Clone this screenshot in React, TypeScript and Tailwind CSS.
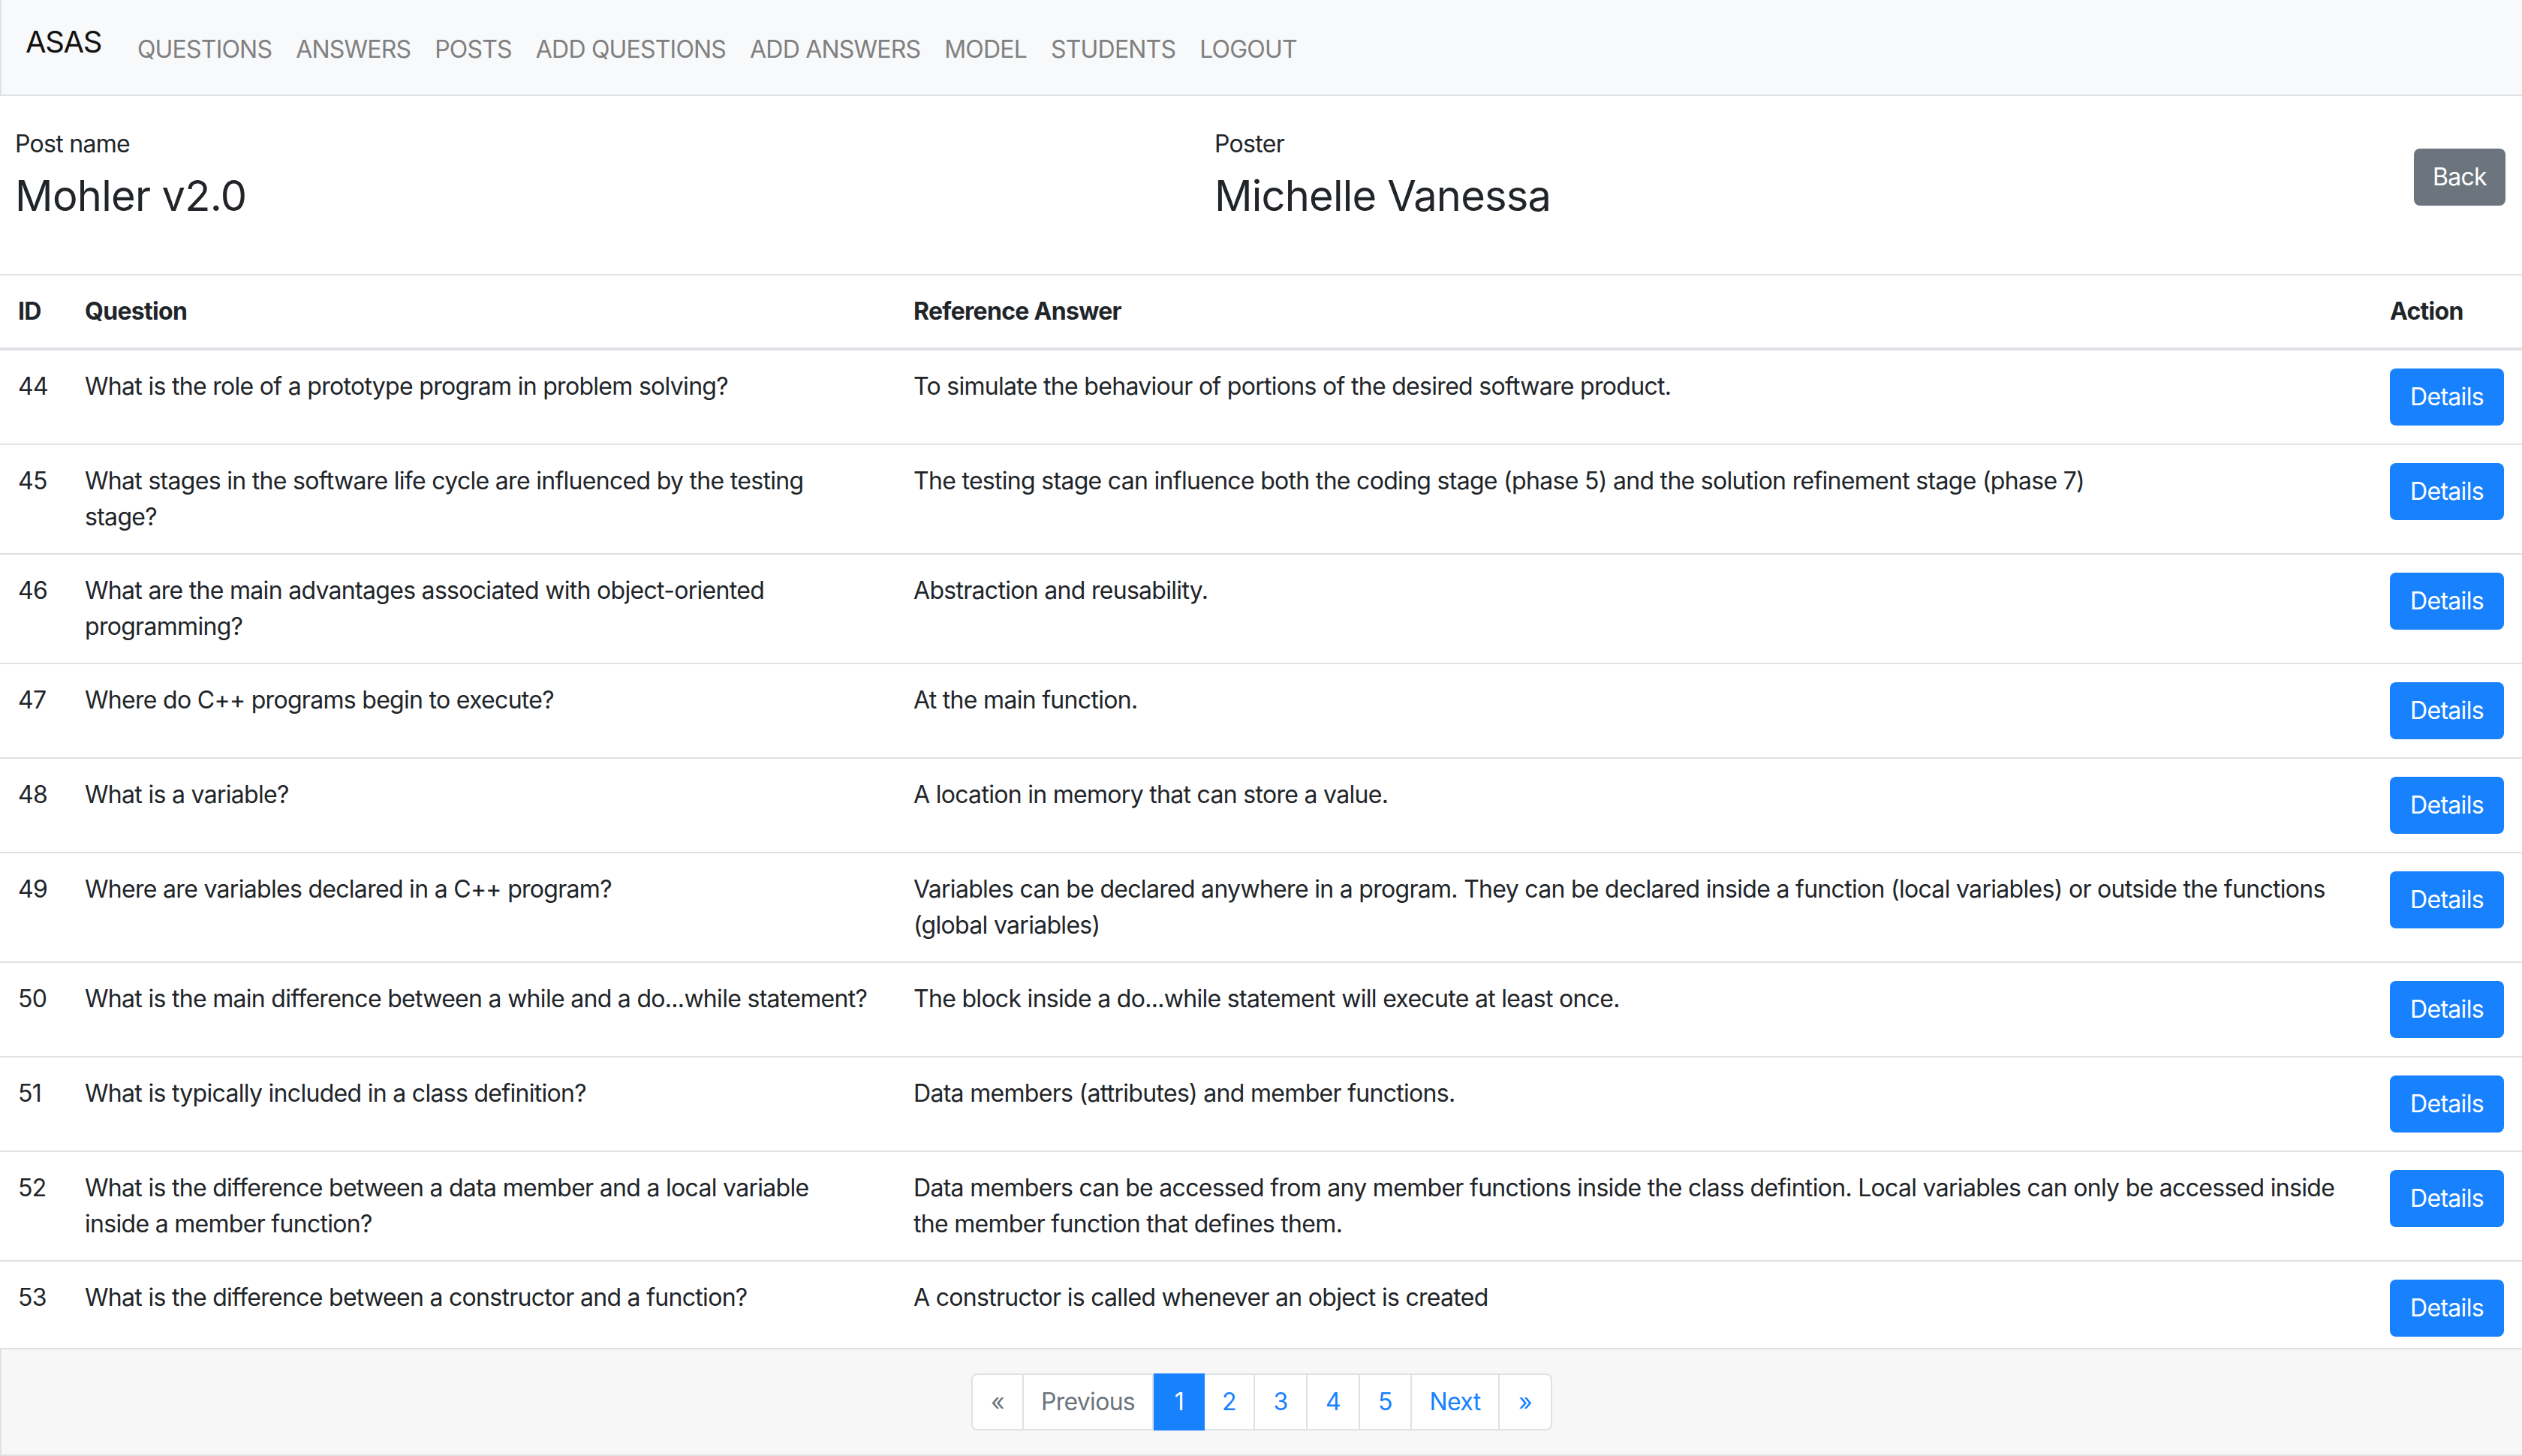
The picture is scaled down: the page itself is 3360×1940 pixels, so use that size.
// Post detail page — post header, list of questions with reference answers, pager.
const rows: { id: number; q: string[]; a: string[] }[] = [
  { id: 44, q: ['What is the role of a prototype program in problem solving?'], a: ['To simulate the behaviour of portions of the desired software product.'] },
  {
    id: 45,
    q: ['What stages in the software life cycle are influenced by the testing', 'stage?'],
    a: ['The testing stage can influence both the coding stage (phase 5) and the solution refinement stage (phase 7)'],
  },
  { id: 46, q: ['What are the main advantages associated with object-oriented', 'programming?'], a: ['Abstraction and reusability.'] },
  { id: 47, q: ['Where do C++ programs begin to execute?'], a: ['At the main function.'] },
  { id: 48, q: ['What is a variable?'], a: ['A location in memory that can store a value.'] },
  {
    id: 49,
    q: ['Where are variables declared in a C++ program?'],
    a: [
      'Variables can be declared anywhere in a program. They can be declared inside a function (local variables) or outside the functions',
      '(global variables)',
    ],
  },
  { id: 50, q: ['What is the main difference between a while and a do...while statement?'], a: ['The block inside a do...while statement will execute at least once.'] },
  { id: 51, q: ['What is typically included in a class definition?'], a: ['Data members (attributes) and member functions.'] },
  {
    id: 52,
    q: ['What is the difference between a data member and a local variable', 'inside a member function?'],
    a: [
      'Data members can be accessed from any member functions inside the class defintion. Local variables can only be accessed inside',
      'the member function that defines them.',
    ],
  },
  { id: 53, q: ['What is the difference between a constructor and a function?'], a: ['A constructor is called whenever an object is created'] },
];

const navItems = ['QUESTIONS', 'ANSWERS', 'POSTS', 'ADD QUESTIONS', 'ADD ANSWERS', 'MODEL', 'STUDENTS', 'LOGOUT'];

function Lines({ lines }: { lines: string[] }) {
  return (
    <>
      {lines.map((l, i) => (
        <div key={i} className="whitespace-nowrap">
          {l}
        </div>
      ))}
    </>
  );
}

function Pager() {
  const base = 'flex h-[76px] items-center justify-center border-y-2 border-r-2 border-[#dee2e6] bg-white text-[32px] leading-[40px]';
  return (
    <div className="flex">
      <span className={`${base} w-[70px] rounded-l-[8px] border-l-2 text-[#6c757d]`}>«</span>
      <span className={`${base} w-[173px] text-[#6c757d]`}>Previous</span>
      <span className="flex h-[76px] w-[68px] items-center justify-center bg-[#1781fe] text-[32px] leading-[40px] text-white">1</span>
      <span className={`${base} w-[67px] text-[#1781fe]`}>2</span>
      <span className={`${base} w-[70px] text-[#1781fe]`}>3</span>
      <span className={`${base} w-[70px] text-[#1781fe]`}>4</span>
      <span className={`${base} w-[69px] text-[#1781fe]`}>5</span>
      <span className={`${base} w-[117px] text-[#1781fe]`}>Next</span>
      <span className={`${base} w-[70px] rounded-r-[8px] text-[#1781fe]`}>»</span>
    </div>
  );
}

export default function App() {
  return (
    <div className="flex h-[1940px] w-[3360px] flex-col overflow-hidden bg-white font-['Inter','Liberation_Sans',sans-serif] text-[32px] leading-[48px] tracking-[-0.7px] text-[#212529]">
      {/* navbar */}
      <nav className="box-border flex h-[128px] shrink-0 items-center border-b-2 border-l-2 border-[#dee2e6] bg-[#f8f9fa] pl-[32px]">
        <span className="mb-[14px] mr-[32px] text-[40px] leading-[60px] tracking-[-1.4px] text-[#111]">ASAS</span>
        {navItems.map((n) => (
          <span key={n} className="mt-[5px] px-[16px] tracking-[-0.8px] text-[#808080]">
            {n}
          </span>
        ))}
      </nav>

      <main className="flex-1 overflow-hidden">
        <div className="flex h-[237px] items-start pl-[20px] pt-[40px]">
          <div className="w-[1598px]">
            <div>Post name</div>
            <div className="mt-[11px] text-[56px] leading-[68px] tracking-[-0.7px]">Mohler v2.0</div>
          </div>
          <div className="flex-1">
            <div>Poster</div>
            <div className="mt-[11px] text-[56px] leading-[68px] tracking-[-0.8px]">Michelle Vanessa</div>
          </div>
          <button className="mr-[22px] mt-[30px] flex h-[76px] w-[122px] items-center justify-center rounded-[8px] bg-[#6c757d] text-white">
            Back
          </button>
        </div>

        <table className="w-full table-fixed border-collapse">
          <colgroup>
            <col className="w-[89px]" />
            <col className="w-[1104px]" />
            <col className="w-[1967px]" />
            <col className="w-[200px]" />
          </colgroup>
          <thead>
            <tr className="border-b-4 border-t-2 border-[#dee2e6] text-left font-bold">
              <th className="p-[24px]">ID</th>
              <th className="p-[24px]">Question</th>
              <th className="p-[24px]">Reference Answer</th>
              <th className="p-[24px]">Action</th>
            </tr>
          </thead>
          <tbody>
            {rows.map((r, i) => (
              <tr key={r.id} className={i === 0 ? '' : 'border-t-2 border-[#dee2e6]'}>
                <td className="p-[24px] align-top">{r.id}</td>
                <td className="p-[24px] align-top">
                  <Lines lines={r.q} />
                </td>
                <td className="p-[24px] align-top">
                  <Lines lines={r.a} />
                </td>
                <td className="p-[24px] align-top">
                  <button className="flex h-[76px] w-[152px] items-center justify-center rounded-[8px] bg-[#1781fe] text-white">
                    Details
                  </button>
                </td>
              </tr>
            ))}
          </tbody>
        </table>
      </main>

      <footer className="box-border flex h-[144px] shrink-0 items-center justify-center border-y-2 border-l-2 border-[#dee2e6] bg-[#f7f7f7]">
        <Pager />
      </footer>
    </div>
  );
}
